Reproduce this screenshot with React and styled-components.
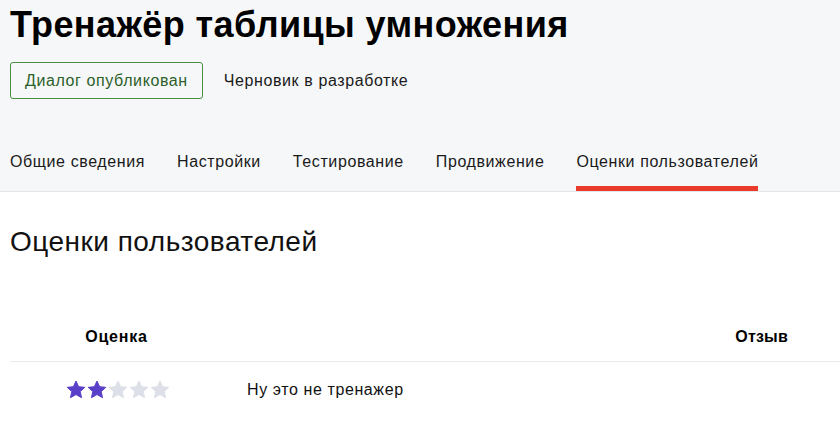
import React from "react";
import styled, { createGlobalStyle } from "styled-components";

const Global = createGlobalStyle`
  html, body { margin: 0; padding: 0; background: #ffffff; }
  body { font-family: "Liberation Sans", Arial, Helvetica, sans-serif; color: #111111; }
  * { box-sizing: border-box; }
`;

const Header = styled.header`
  background: #f6f7f9;
  border-bottom: 1px solid #e4e5e8;
  padding-top: 4px;
`;

const Title = styled.h1`
  margin: 0;
  padding: 0 10px;
  font-size: 36px;
  line-height: 41px;
  font-weight: 700;
  letter-spacing: 0.4px;
  color: #000;
`;

const StatusRow = styled.div`
  display: flex;
  align-items: center;
  gap: 21px;
  padding: 0 10px;
  margin-top: 17px;
`;

const StatusButton = styled.div`
  border: 1px solid ${(p) => (p.$active ? "#4a8f45" : "transparent")};
  border-radius: 3px;
  padding: 8px 14px;
  font-size: 16px;
  line-height: 19px;
  letter-spacing: 0.6px;
  color: ${(p) => (p.$active ? "#2d5f2b" : "#1a1a1a")};
  margin-left: ${(p) => (p.$active ? "0" : "-15px")};
`;

const Tabs = styled.nav`
  display: flex;
  gap: 32px;
  padding: 0 10px;
  margin-top: 53px;
`;

const Tab = styled.div`
  font-size: 16px;
  line-height: 19px;
  letter-spacing: 0.6px;
  padding-bottom: 15px;
  border-bottom: 5px solid ${(p) => (p.$active ? "#ea3a2b" : "transparent")};
  color: #1a1a1a;
`;

const Main = styled.main`
  padding-left: 10px;
`;

const Heading = styled.h2`
  margin: 34px 0 0;
  font-size: 28px;
  line-height: 32px;
  font-weight: 400;
  letter-spacing: 0.5px;
  color: #111;
`;

const Table = styled.div`
  margin-top: 53px;
  display: grid;
  grid-template-columns: 213px 1fr;
`;

const HeadCell = styled.div`
  padding: 16px ${(p) => (p.$right ? "52px" : "0")} 15px 0;
  font-size: 16px;
  line-height: 19px;
  font-weight: 700;
  letter-spacing: ${(p) => (p.$right ? "0.2px" : "0.8px")};
  color: #000;
  text-align: ${(p) => (p.$right ? "right" : "center")};
  border-bottom: 1px solid #ebebeb;
`;

const Cell = styled.div`
  padding: 18px 0 18px ${(p) => (p.$text ? "24px" : "0")};
  font-size: 16px;
  line-height: 19px;
  letter-spacing: 0.6px;
  color: #111;
  display: flex;
  align-items: center;
  justify-content: ${(p) => (p.$text ? "flex-start" : "center")};
`;

const Stars = styled.div`
  display: flex;
  gap: 1px;
  margin-left: 3px;
`;

const StarSvg = styled.svg`
  width: 20px;
  height: 19px;
  display: block;
`;

const Star = ({ filled }) => (
  <StarSvg viewBox="0 0 24 23">
    <path
      d="M12 1.2l3.2 6.9 7.5.8-5.6 5.1 1.6 7.4L12 17.6l-6.7 3.8 1.6-7.4L1.3 8.9l7.5-.8z"
      fill={filled ? "#5a3fc9" : "#dde0e8"}
      stroke={filled ? "#5a3fc9" : "#dde0e8"}
      strokeLinejoin="round"
      strokeWidth="1.2"
    />
  </StarSvg>
);

const tabs = [
  "Общие сведения",
  "Настройки",
  "Тестирование",
  "Продвижение",
  "Оценки пользователей",
];

export default function App() {
  const rating = 2;
  return (
    <>
      <Global />
      <Header>
        <Title>Тренажёр таблицы умножения</Title>
        <StatusRow>
          <StatusButton $active>Диалог опубликован</StatusButton>
          <StatusButton>Черновик в разработке</StatusButton>
        </StatusRow>
        <Tabs>
          {tabs.map((t, i) => (
            <Tab key={t} $active={i === tabs.length - 1}>
              {t}
            </Tab>
          ))}
        </Tabs>
      </Header>
      <Main>
        <Heading>Оценки пользователей</Heading>
        <Table>
          <HeadCell>Оценка</HeadCell>
          <HeadCell $right>Отзыв</HeadCell>
          <Cell>
            <Stars>
              {[0, 1, 2, 3, 4].map((i) => (
                <Star key={i} filled={i < rating} />
              ))}
            </Stars>
          </Cell>
          <Cell $text>Ну это не тренажер</Cell>
        </Table>
      </Main>
    </>
  );
}
